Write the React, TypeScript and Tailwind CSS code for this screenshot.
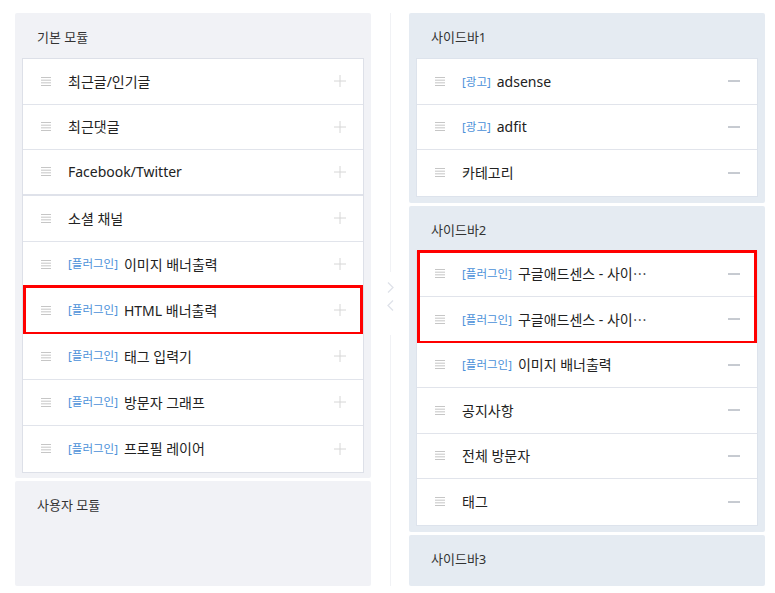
import React from "react";

type Item = { tag?: string; label: string; thick?: boolean; ellipsis?: boolean };

const Handle = () => (
  <svg width="10" height="9" viewBox="0 0 10 9" className="shrink-0">
    <rect x="0" y="0" width="10" height="1" fill="#c6c6c6" />
    <rect x="0" y="2.67" width="10" height="1" fill="#c6c6c6" />
    <rect x="0" y="5.33" width="10" height="1" fill="#c6c6c6" />
    <rect x="0" y="8" width="10" height="1" fill="#c6c6c6" />
  </svg>
);

const Plus = () => (
  <svg width="12" height="12" viewBox="0 0 12 12" className="shrink-0">
    <line x1="6" y1="0" x2="6" y2="12" stroke="#d6d6d6" strokeWidth="1" />
    <line x1="0" y1="6" x2="12" y2="6" stroke="#d6d6d6" strokeWidth="1" />
  </svg>
);

const Minus = () => (
  <svg width="12" height="2" viewBox="0 0 12 2" className="shrink-0">
    <line x1="0" y1="1" x2="12" y2="1" stroke="#8e96a3" strokeWidth="1" />
  </svg>
);

function Row({
  item,
  mode,
  last,
  highlight,
  tall,
}: {
  item: Item;
  mode: "add" | "remove";
  last?: boolean;
  highlight?: boolean;
  tall?: boolean;
}) {
  return (
    <div
      className={
        "relative flex items-center bg-white pl-[18px] pr-[17px] " +
        (tall ? "h-[46px] " : "h-[45.5px] ") +
        (last ? "" : item.thick ? "border-b-2 border-[#dfe2ea]" : "border-b border-[#e1e4eb]")
      }
    >
      <Handle />
      <div className="ml-[17px] flex min-w-0 flex-1 items-center gap-[6px]">
        {item.tag && (
          <span className="shrink-0 text-[11.5px] text-[#4a90d9]">[{item.tag}]</span>
        )}
        <span className="whitespace-nowrap text-[14px] text-[#222]">
          {item.label}
          {item.ellipsis && (
            <span style={{ fontFamily: '"Noto Sans CJK JP", sans-serif' }}>…</span>
          )}
        </span>
      </div>
      {mode === "add" ? <Plus /> : <Minus />}
      {highlight && (
        <div className="pointer-events-none absolute left-0 right-0 top-[-3px] bottom-[-2px] border-[3px] border-[#ff0000]" />
      )}
    </div>
  );
}

function Header({ title, inset }: { title: string; inset?: boolean }) {
  return (
    <div
      className={
        "h-[45px] pt-[15px] text-[13px] leading-[18px] text-[#333] " +
        (inset ? "pl-[15px]" : "pl-[22px]")
      }
    >
      {title}
    </div>
  );
}

const basic: Item[] = [
  { label: "최근글/인기글" },
  { label: "최근댓글" },
  { label: "Facebook/Twitter", thick: true },
  { label: "소셜 채널" },
  { tag: "플러그인", label: "이미지 배너출력" },
  { tag: "플러그인", label: "HTML 배너출력" },
  { tag: "플러그인", label: "태그 입력기" },
  { tag: "플러그인", label: "방문자 그래프" },
  { tag: "플러그인", label: "프로필 레이어" },
];

const side1: Item[] = [
  { tag: "광고", label: "adsense" },
  { tag: "광고", label: "adfit" },
  { label: "카테고리" },
];

const side2rest: Item[] = [
  { tag: "플러그인", label: "이미지 배너출력" },
  { label: "공지사항" },
  { label: "전체 방문자" },
  { label: "태그" },
];

export default function App() {
  return (
    <div
      className="flex h-[593px] w-[775px] bg-white pl-[15px] pt-[13px]"
      style={{ fontFamily: '"Noto Sans", "Noto Sans CJK KR", sans-serif' }}
    >
      {/* Left column */}
      <div className="flex h-[573px] w-[356px] flex-col gap-[3px]">
        <div className="rounded-[2px] bg-[#f1f2f6] px-[7px] pb-[5px]">
          <Header title="기본 모듈" inset />
          <div className="border border-[#dde0e8] bg-white">
            {basic.map((it, i) => (
              <Row
                key={i}
                item={it}
                mode="add"
                tall={i >= 3}
                last={i === basic.length - 1}
                highlight={it.label === "HTML 배너출력"}
              />
            ))}
          </div>
        </div>
        <div className="flex-1 rounded-[2px] bg-[#f1f2f6]">
          <Header title="사용자 모듈" />
        </div>
      </div>

      {/* Middle */}
      <div className="flex h-[573px] w-[38px] flex-col items-center">
        <div className="h-[259px] w-px bg-[#f1f2f5]" />
        <div className="flex flex-col items-center gap-[7px] py-[10px]">
          <svg width="7" height="11" viewBox="0 0 7 11">
            <polyline points="1,0.5 6,5.5 1,10.5" fill="none" stroke="#dfe2e9" strokeWidth="1.3" />
          </svg>
          <svg width="7" height="11" viewBox="0 0 7 11">
            <polyline points="6,0.5 1,5.5 6,10.5" fill="none" stroke="#dfe2e9" strokeWidth="1.3" />
          </svg>
        </div>
        <div className="mt-[14px] w-px flex-1 bg-[#f1f2f5]" />
      </div>

      {/* Right column */}
      <div className="flex h-[573px] w-[356px] flex-col gap-[3px]">
        <div className="rounded-[2px] bg-[#e5ebf2] px-[7px] pb-[6px]">
          <Header title="사이드바1" inset />
          <div className="border border-[#dde3ec] bg-white">
            {side1.map((it, i) => (
              <Row key={i} item={it} mode="remove" last={i === side1.length - 1} />
            ))}
          </div>
        </div>
        <div className="rounded-[2px] bg-[#e5ebf2] px-[7px] pb-[6px]">
          <Header title="사이드바2" inset />
          <div className="border border-[#dde3ec] bg-white">
            <div className="relative">
              <Row item={{ tag: "플러그인", label: "구글애드센스 - 사이", ellipsis: true }} mode="remove" />
              <Row item={{ tag: "플러그인", label: "구글애드센스 - 사이", ellipsis: true }} mode="remove" />
              <div className="pointer-events-none absolute left-0 right-0 top-[-2px] bottom-[-1px] border-[3px] border-[#ff0000]" />
            </div>
            {side2rest.map((it, i) => (
              <Row key={i} item={it} mode="remove" last={i === side2rest.length - 1} />
            ))}
          </div>
        </div>
        <div className="flex-1 rounded-[2px] bg-[#e5ebf2]">
          <Header title="사이드바3" />
        </div>
      </div>
    </div>
  );
}
